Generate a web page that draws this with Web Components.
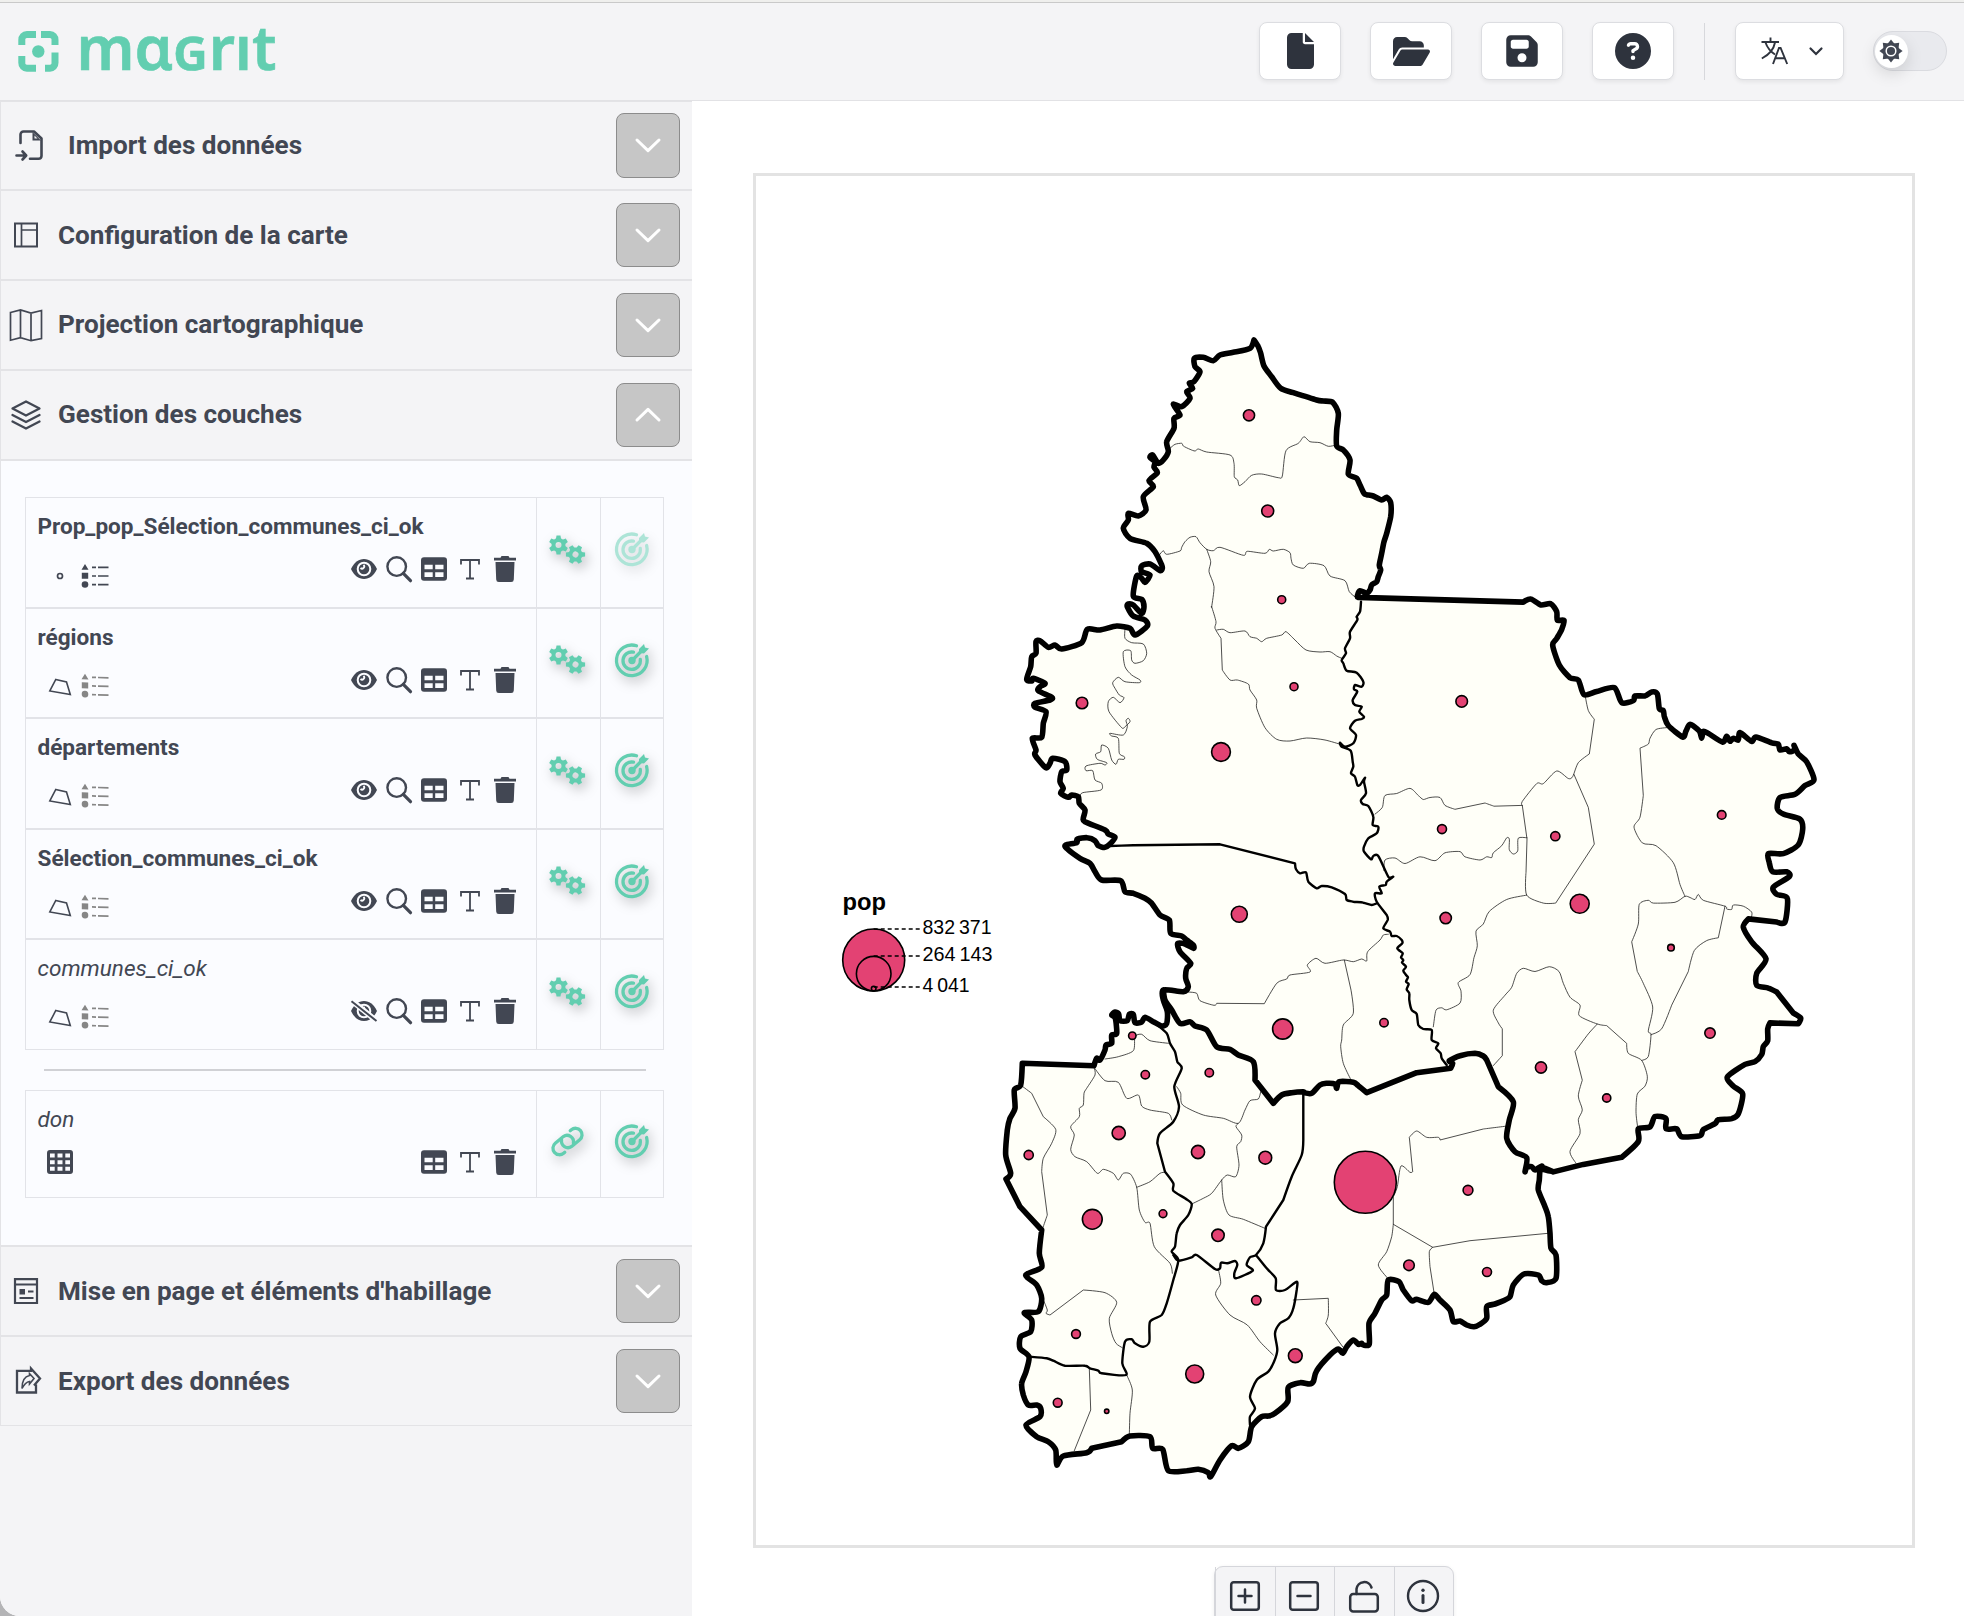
<!DOCTYPE html>
<html lang="fr">
<head>
<meta charset="utf-8">
<title>Magrit</title>
<style>
html,body{margin:0;height:100%;overflow:hidden;background:#b4b4b6}
body{font-family:Roboto,"Liberation Sans",sans-serif;color:#424753}
</style>
</head>
<body>
<mg-app>
  <mg-header slot="header"></mg-header>
  <mg-section slot="side" icon="import" label="Import des données" first></mg-section>
  <mg-section slot="side" icon="config" label="Configuration de la carte"></mg-section>
  <mg-section slot="side" icon="map" label="Projection cartographique" raise></mg-section>
  <mg-section slot="side" icon="layers" label="Gestion des couches" open raise></mg-section>
  <mg-section slot="side" icon="layout" label="Mise en page et éléments d'habillage"></mg-section>
  <mg-section slot="side" icon="export" label="Export des données" last></mg-section>
  <mg-map slot="main"></mg-map>
  <mg-tools slot="main"></mg-tools>
</mg-app>
<template id="layers">
  <mg-layer label="Prop_pop_Sélection_communes_ci_ok" kind="point" faded></mg-layer>
  <mg-layer label="régions" kind="poly"></mg-layer>
  <mg-layer label="départements" kind="poly"></mg-layer>
  <mg-layer label="Sélection_communes_ci_ok" kind="poly"></mg-layer>
  <mg-layer label="communes_ci_ok" kind="poly" off></mg-layer>
  <mg-layer slot="tables" label="don" kind="table" off></mg-layer>
</template>
<script>
document.querySelector('mg-section[open]').append(document.getElementById('layers').content.cloneNode(true));
const gear=(x,y,rot)=>`<g transform="translate(${x} ${y}) rotate(${rot})"><circle r="5" fill="none" stroke="currentColor" stroke-width="4"/>${[0,60,120,180,240,300].map(a=>`<path transform="rotate(${a})" d="M-2.600-6L-2-9.600H2L2.600-6z"/>`).join('')}</g>`;
const EYE='<path d="M0 13C3 6.500 7.500 3 13 3s10 3.500 13 10c-3 6.500-7.500 10-13 10S3 19.500 0 13z"/><circle cx="13" cy="13" r="6.300" fill="none" stroke="#fbfcff" stroke-width="2"/><path d="M9.500 12a2 2 0 0 0 3-3.200" fill="none" stroke="#fbfcff" stroke-width="1.800"/>';
const ICONS={
 file:[27,36,'0 0 384 512','<path d="M0 64C0 28.700 28.700 0 64 0H224V128c0 17.700 14.300 32 32 32H384V448c0 35.300-28.700 64-64 64H64c-35.300 0-64-28.700-64-64V64zm384 64H256V0L384 128z"/>'],
 folder:[37,33,'0 0 576 512','<path d="M88.700 223.800L0 375.800V96C0 60.700 28.700 32 64 32H181.500c17 0 33.300 6.700 45.300 18.700l26.500 26.500c12 12 28.300 18.700 45.300 18.700H416c35.300 0 64 28.700 64 64v32H144c-22.800 0-43.800 12.100-55.300 31.800zm27.600 16.100C122.100 230 132.600 224 144 224H544c11.500 0 22 6.100 27.700 16.100s5.700 22.200-.1 32.100l-112 192C453.900 474 443.400 480 432 480H32c-11.500 0-22-6.100-27.700-16.100s-5.700-22.200 .1-32.100l112-192z"/>'],
 save:[32,36,'0 0 448 512','<path fill-rule="evenodd" d="M64 32C28.700 32 0 60.700 0 96V416c0 35.300 28.700 64 64 64H384c35.300 0 64-28.700 64-64V173.300c0-17-6.700-33.300-18.700-45.300L352 50.700C340 38.700 323.700 32 306.700 32H64zm0 96c0-17.700 14.300-32 32-32H288c17.700 0 32 14.300 32 32v64c0 17.700-14.300 32-32 32H96c-17.700 0-32-14.300-32-32V128zM224 288a64 64 0 1 1 0 128 64 64 0 1 1 0-128z"/>'],
 help:[36,36,'0 0 512 512','<path fill-rule="evenodd" d="M256 512A256 256 0 1 0 256 0a256 256 0 1 0 0 512zM169.800 165.300c7.900-22.300 29.100-37.300 52.800-37.300h58.300c34.900 0 63.100 28.300 63.100 63.100c0 22.600-12.100 43.500-31.700 54.800L280 264.400c-.2 13-10.900 23.600-24 23.600c-13.300 0-24-10.700-24-24V250.500c0-8.600 4.600-16.500 12.100-20.800l44.300-25.400c4.700-2.700 7.600-7.700 7.600-13.100c0-8.400-6.800-15.100-15.100-15.100H222.600c-3.400 0-6.400 2.100-7.500 5.300l-.4 1.200c-4.400 12.500-18.200 19-30.600 14.600s-19-18.200-14.600-30.600l.4-1.200zM224 352a32 32 0 1 1 64 0 32 32 0 1 1 -64 0z"/>'],
 lang:[28,28,'0 0 28 28','<g fill="none" stroke="currentColor" stroke-width="1.900"><path d="M9.500.5v4M.5 5h17.500M14 5.500C13 11 8.500 17.500.8 21.500M4.500 5.500C6 10 9.500 14.500 14 17.500M12 27l6-16h1.600l6.600 16M14.500 21.200h9.500"/></g>'],
 caret:[14,9,'0 0 14 9','<path d="M1.500 1.500L7 7l5.500-5.500" fill="none" stroke="currentColor" stroke-width="2.200" stroke-linecap="round"/>'],
 sun:[24,24,'-12 -12 24 24',[0,45,90,135,180,225,270,315].map(a=>`<path transform="rotate(${a})" d="M-3.600-7L0-11.600 3.600-7z"/>`).join('')+'<circle r="8"/><circle r="4.800" fill="none" stroke="#fff" stroke-width="1.500"/>'],
 import:[32,32,'0 0 32 32','<g fill="none" stroke="currentColor" stroke-width="2.600" stroke-linecap="round" stroke-linejoin="round"><path d="M7.500 14V5.500A3 3 0 0 1 10.500 2.500H21L28.500 9.500V27A3 3 0 0 1 25.500 29.800H17"/><path d="M3.500 26.500H13M9.500 22.500L13.200 26.500 9.500 30.500"/></g><path d="M19.500 3v8.500H28z"/><path d="M21.500 6.500v3h3z" fill="#f4f4f6"/>'],
 config:[32,32,'0 0 32 32','<g fill="none" stroke="currentColor"><rect x="5" y="4.500" width="22" height="23" stroke-width="2"/><path d="M11.500 4v24M11.500 11H27" stroke-width="1.700"/></g>'],
 map:[34,34,'0 0 34 34','<path d="M1.500 4.500L11.500 2l10.500 3L32.500 2.500V30.500L22 32.700l-10.500-3-10 2.500zM11.500 2v28M22 5v27.500" fill="none" stroke="currentColor" stroke-width="1.700"/>'],
 layers:[32,32,'0 0 32 32','<g fill="none" stroke="currentColor" stroke-width="2.300" stroke-linejoin="round" stroke-linecap="round"><path d="M16 2.500L29.500 9.500 16 16.500 2.500 9.500z"/><path d="M2.500 16L16 23l13.500-7M2.500 22.500L16 29.500l13.500-7"/></g>'],
 layout:[32,32,'0 0 32 32','<g fill="none" stroke="currentColor" stroke-width="2.200"><path d="M5 4.200H27V28H5zM5 9.500H27M18 16.500h5.500M9.500 23h14"/></g><rect x="9.500" y="14" width="5.500" height="5.500"/>'],
 export:[32,32,'0 0 32 32','<g fill="none" stroke="currentColor" stroke-width="2.300" stroke-linejoin="miter"><path d="M17.500 5.800H7V27.500H26V19.500M17.500 5.800H21V3.500L30 13.500 24 20.500"/><path d="M12 23.500C12 15.500 14.500 11.500 19.500 10.500V8.500L24 13.500 19.500 19V16.500C16 17 14 19.500 12 23.500z" stroke-width="1.600"/></g>'],
 chev:[28,20,'0 0 28 20','<path d="M3 5L14 15.700 25 5" fill="none" stroke="#fff" stroke-width="3" stroke-linecap="round" stroke-linejoin="round"/>'],
 eye:[26,26,'0 0 26 26',EYE],
 eyeoff:[26,26,'0 0 26 26',EYE+'<path d="M.5 2.500L25 22.500" stroke="#fbfcff" stroke-width="5.500"/><path d="M.5 3.200L25.500 23" stroke="currentColor" stroke-width="2"/>'],
 search:[26,26,'0 0 26 26','<g fill="none" stroke="currentColor"><circle cx="10.700" cy="10.600" r="9.300" stroke-width="2.400"/><path d="M17.300 17.300L24.500 24.700" stroke-width="3.200" stroke-linecap="round"/></g>'],
 table:[26,26,'0 0 26 26','<path fill-rule="evenodd" d="M3 1.300H23A3 3 0 0 1 26 4.300V21.700A3 3 0 0 1 23 24.700H3A3 3 0 0 1 0 21.700V4.300A3 3 0 0 1 3 1.300zM3.500 8.800V13.300H11.700V8.800zM14.200 8.800V13.300H22.500V8.800zM3.500 16.200V21H11.700V16.200zM14.200 16.200V21H22.500V16.200z"/>'],
 type:[26,26,'0 0 26 26','<path d="M4 8.500V4H22V8.500M13 4V22.500M9 22.500H17" fill="none" stroke="currentColor" stroke-width="1.800"/>'],
 trash:[26,26,'0 0 26 26','<path d="M2 1.800H8.500L9.500 0H16.500L17.500 1.800H24V4.500H2zM3.500 6H22.500L21.800 23.500A2.600 2.600 0 0 1 19.200 26H6.800A2.600 2.600 0 0 1 4.200 23.500z"/>'],
 grid:[26,26,'0 0 26 26','<path fill-rule="evenodd" d="M3 1H23A3 3 0 0 1 26 4V22A3 3 0 0 1 23 25H3A3 3 0 0 1 0 22V4A3 3 0 0 1 3 1zM3 4.500H7.700V8.500H3zM10.500 4.500H15.500V8.500H10.500zM18.300 4.500H23V8.500H18.300zM3 11.200H7.700V15.200H3zM10.500 11.200H15.500V15.200H10.500zM18.300 11.200H23V15.200H18.300zM3 17.800H7.700V21.800H3zM10.500 17.800H15.500V21.800H10.500zM18.300 17.800H23V21.800H18.300z"/>'],
 point:[26,26,'0 0 26 26','<circle cx="13" cy="13" r="2.500" fill="none" stroke="currentColor" stroke-width="1.700"/>'],
 poly:[26,26,'0 0 26 26','<path d="M8.800 5.500L19.500 8 23.300 20.600 2.800 17z" fill="none" stroke="currentColor" stroke-width="1.600"/>'],
 legend:[28,26,'0 0 28 26','<path d="M4 1L7.500 6.800H.5zM.8 9.700H7.200V15.700H.8z"/><circle cx="4" cy="21.500" r="3.300"/><path d="M11 4.400h4M17 4.400h10.500M11 13h4M17 13h10.500M11 21.700h4M17 21.700h10.500" stroke="currentColor" stroke-width="1.700"/>'],
 gears:[36,29,'0 0 36 29',gear(9,9.5,0)+gear(26,19,30)],
 target:[36,36,'0 0 36 36','<g fill="none" stroke="currentColor" stroke-width="3.300" stroke-linecap="round"><path d="M22.500 3.300A15.300 15.300 0 1 0 32.600 14"/><path d="M19.500 9.700A8.700 8.700 0 1 0 26.300 17"/><path d="M18 18L28 8"/></g><circle cx="18" cy="18" r="3.700"/><path d="M25 10.500V6.500L30 1.500 31 5 35 6 30 11z"/>'],
 link:[36,36,'-18 -18 36 36','<g transform="rotate(-40)" fill="none" stroke="currentColor" stroke-width="3.300" stroke-linecap="round"><path d="M-9 6.500H-10.500A6.500 6.500 0 0 1-10.500-6.500H0A6.500 6.500 0 0 1 3.500 5"/><path transform="rotate(180)" d="M-9 6.500H-10.500A6.500 6.500 0 0 1-10.500-6.500H0A6.500 6.500 0 0 1 3.500 5"/></g>'],
 plus:[34,34,'0 0 34 34','<g fill="none" stroke="currentColor" stroke-width="2.500" stroke-linecap="round"><rect x="3.200" y="3.200" width="27.600" height="27.600" rx="2.500"/><path d="M10.500 17H23.500M17 10.500V23.500"/></g>'],
 minus:[34,34,'0 0 34 34','<g fill="none" stroke="currentColor" stroke-width="2.500" stroke-linecap="round"><rect x="3.200" y="3.200" width="27.600" height="27.600" rx="2.500"/><path d="M10.500 17H23.500"/></g>'],
 lock:[34,34,'0 0 34 34','<g fill="none" stroke="currentColor" stroke-width="2.500" stroke-linecap="round"><rect x="3.200" y="15" width="27.600" height="17.500" rx="3"/><path d="M9.500 15V10A7.700 7.700 0 0 1 24.500 8.500"/></g>'],
 info:[34,34,'0 0 34 34','<g fill="none" stroke="currentColor" stroke-width="2.400" stroke-linecap="round"><circle cx="17" cy="17" r="15"/><path d="M17 16.500V23.500" stroke-width="3"/></g><circle cx="17" cy="11.300" r="1.700"/>']
};
const svg=n=>{const i=ICONS[n];return `<svg width="${i[0]}" height="${i[1]}" viewBox="${i[2]}" fill="currentColor">${i[3]}</svg>`};
const def=(name,render)=>customElements.define(name,class extends HTMLElement{
  connectedCallback(){ if(!this.shadowRoot) this.attachShadow({mode:'open'}).innerHTML=render(this); }
});

def('mg-icon',e=>`<style>:host{display:inline-flex;flex:none}svg{display:block;overflow:visible}</style>${svg(e.getAttribute('name'))}`);

def('mg-app',()=>`<style>
:host{display:flex;flex-direction:column;height:1616px;width:1964px;background:#fff;border-bottom-left-radius:20px;overflow:hidden}
.body{display:flex;flex:1;min-height:0}
aside{width:692px;background:#f4f4f6;flex:none}
main{flex:1;display:flex;flex-direction:column;min-width:0;padding-top:72px}
</style><slot name="header"></slot><div class="body"><aside><slot name="side"></slot></aside><main><slot name="main"></slot></main></div>`);

def('mg-header',()=>`<style>
:host{display:flex;box-sizing:border-box;height:101px;flex:none;background:#f4f4f6;border-top:2px solid #efefed;border-bottom:1px solid #e2e2e5;padding:0 17px 0 18px;justify-content:space-between;color:#2e333d;box-shadow:inset 0 1px #c9c9c9}
.logo{margin-top:24px;display:block;overflow:visible}
nav{display:flex;align-items:center;height:98px}
.b{box-sizing:border-box;width:82px;height:58px;background:#fff;border:1px solid #dcdde1;border-radius:8px;box-shadow:0 2px 4px #0001;display:flex;align-items:center;justify-content:center;margin-right:29px}
.sep{width:1px;height:57px;background:#d7d8dc;margin:0 30px 0 1px}
.lang{width:109px;gap:20px;padding-left:4px}
.tg{box-sizing:border-box;width:74px;height:40px;border-radius:20px;border:1px solid #dadbe0;background:#e9eaee;display:flex;align-items:center;padding-left:1px}
.k{width:33px;height:33px;border-radius:50%;background:#fff;box-shadow:0 6px 16px #00000020;display:flex;align-items:center;justify-content:center;color:#424753}
.k mg-icon{margin-right:2px}
</style>
<svg class="logo" width="262" height="50" viewBox="0 0 262 50">
<path fill="none" stroke="#62ceb0" stroke-width="7" d="M3.800 19V13.800A5 5 0 0 1 8.800 8.500H18M23 8.500H32A5 5 0 0 1 37 13.800V19M37 26.500V37A5 5 0 0 1 32 42.200H27M18 42.200H8.800A5 5 0 0 1 3.800 37V30"/>
<circle cx="20.300" cy="25.500" r="6.200" fill="#62ceb0"/>
<text x="58.500" y="44.300" textLength="200" lengthAdjust="spacingAndGlyphs" font-family="Noto Sans" font-weight="600" font-size="62" fill="#62ceb0" stroke="#62ceb0" stroke-width=".6">mɑɢrıt</text>
</svg>
<nav>${['file','folder','save','help'].map(n=>`<div class="b"><mg-icon name="${n}"></mg-icon></div>`).join('')}<div class="sep"></div><div class="b lang"><mg-icon name="lang"></mg-icon><mg-icon name="caret"></mg-icon></div><div class="tg"><div class="k"><mg-icon name="sun"></mg-icon></div></div></nav>`);

def('mg-section',e=>{
 const open=e.hasAttribute('open'),first=e.hasAttribute('first'),last=e.hasAttribute('last'),raise=e.hasAttribute('raise');
 return `<style>
:host{display:block;border-left:1px solid #e3e3e6;border-bottom:${last?1:2}px solid #e3e3e6;${first?'border-top:1px solid #e3e3e6;':''}}
.h{display:flex;align-items:center;box-sizing:border-box;height:${first?87:88}px;padding:0 12px ${first?1:0}px ${first?11:8}px}
.i{width:${first?38:33}px;display:flex;justify-content:center;margin-left:${first?-2:0}px;padding-bottom:${raise?1:0}px}
h2{margin:0 0 0 ${first?20:16}px;flex:1;font-size:26.100px;font-weight:700;line-height:32px;padding-bottom:${raise?2:1}px;white-space:nowrap}
.c{box-sizing:border-box;width:64px;height:${first?65:64}px;background:#c6c6c6;border:1px solid #8c8c8c;border-radius:8px;display:flex;align-items:center;justify-content:center}
.c mg-icon{transform:${open?'rotate(180deg)':'none'}}
.p{box-sizing:border-box;height:786px;border-top:2px solid #e3e3e6;background:#fbfcff;padding:36px 28px 0 24px}
hr{border:0;height:2px;background:#d0d1d5;margin:19px 18px 19px 19px}
</style><div class="h"><div class="i"><mg-icon name="${e.getAttribute('icon')}"></mg-icon></div><h2>${e.getAttribute('label')}</h2><div class="c"><mg-icon name="chev"></mg-icon></div></div>
${open?'<div class="p"><slot></slot><hr><slot name="tables"></slot></div>':''}`});

def('mg-layer',e=>{
 const k=e.getAttribute('kind'),t=k=='table',off=e.hasAttribute('off');
 const acts=[...(t?[]:[off?'eyeoff':'eye','search']),'table','type','trash'];
 return `<style>
:host{display:flex;box-sizing:border-box;height:${t?108:110.5}px;border:1px solid #e2e3e8;background:#fbfcff}
.a{flex:1;padding:15px 18px 0 11.500px}
h3{margin:0;font-size:22.550px;line-height:28px;white-space:nowrap;font-weight:${off?'400;font-style:italic':'700'}}
.r{display:flex;justify-content:space-between;margin-top:15px;align-items:flex-start}
.l{display:flex;gap:8px;padding:${t?'0 0 0 9px':'7px 0 0 9px'};}
.lg{${k=='poly'?'color:#868686;transform:skewY(2deg) translateY(-1px)':''}}
.x{display:flex;gap:9.300px}
.s{width:63.500px;border-left:1px solid #e2e3e8;display:flex;align-items:center;justify-content:center;color:#62ceb0;box-sizing:border-box}
.s mg-icon{filter:drop-shadow(3px 5px 6px #0004);transform:translate(-.5px,-2.500px)}
.s:last-child mg-icon{transform:translate(0,-2.500px);${e.hasAttribute('faded')?'opacity:.5':''}}
</style><div class="a"><h3>${e.getAttribute('label')}</h3><div class="r"><div class="l">${t?'<mg-icon name="grid"></mg-icon>':`<mg-icon name="${k}"></mg-icon><mg-icon class="lg" name="legend"></mg-icon>`}</div><div class="x">${acts.map(a=>`<mg-icon name="${a}"></mg-icon>`).join('')}</div></div></div>
<div class="s"><mg-icon name="${t?'link':'gears'}"></mg-icon></div><div class="s"><mg-icon name="target"></mg-icon></div>`});

// Digitised boundary chunks; each sheet has its own origin and resolution.
const SHEETS={A:[1000,320,3,3],B:[1000,600,3,3],C:[1350,580,3,2.529],D:[990,980,3,3],E:[1220,1030,3,3]};
const at=(s,x,y)=>{const t=SHEETS[s];return [t[0]+x/t[2],t[1]+y/t[3]]};
// Short segments are rounded with a light Catmull-Rom tangent, long ones stay straight.
const line=str=>{
 let s,o=[];
 for(const w of str.trim().split(/\s+/)){if(SHEETS[w]){s=w;continue}const [x,y]=w.split(',').map(Number);o.push(at(s,x,y))}
 let d='M'+o[0].map(v=>v.toFixed(1)).join(' ');
 for(let i=1;i<o.length;i++){
  const a=o[i-1],b=o[i],p=o[i-2]||a,n=o[i+1]||b,len=Math.hypot(b[0]-a[0],b[1]-a[1]);
  const near=(q,r)=>Math.hypot(q[0]-r[0],q[1]-r[1])<26;
  if(len>26){d+='L'+b.map(v=>v.toFixed(1)).join(' ');continue}
  const k=.13,t1=near(p,a)?[(b[0]-p[0])*k,(b[1]-p[1])*k]:[0,0],t2=near(b,n)?[(n[0]-a[0])*k,(n[1]-a[1])*k]:[0,0];
  d+='C'+[a[0]+t1[0],a[1]+t1[1],b[0]-t2[0],b[1]-t2[1],b[0],b[1]].map(v=>v.toFixed(1)).join(' ');
 }
 return d;
};
const OUT=line(`A 762,60 775,80 782,100 792,138 815,170 842,205 880,218 950,240 970,243 998,247 1015,280 1010,330 1010,378 1030,390 1050,420 1045,462 1070,475 1080,495 1092,520 1100,524 1120,528 1145,540 1160,532 1172,548 1172,590 1160,640 1152,665 1145,700 1138,735 1142,750 1135,770 1130,785 1115,795 1110,810 1100,820 1080,812 1072,828
C 25,44 520,56 542,48 572,63 602,60 620,80 622,102 642,102 635,125 620,148 608,165 628,215 660,247 685,253 702,290 740,282 793,272 815,310 850,305 855,293 885,293 905,283 922,288 928,325 940,330 943,345 955,368 998,397 1008,382 1020,365 1048,382 1055,400 1060,383 1075,388 1118,410 1130,395 1140,408 1150,400 1165,405 1170,386 1205,408 1218,397 1265,412 1285,415 1290,430 1310,427 1318,434 1335,430 1332,418 1345,440 1370,460 1392,505 1365,520 1335,542 1290,550 1282,578 1300,592 1350,605 1358,630 1345,670 1300,692 1255,692 1258,715 1268,738 1310,738 1318,750 1270,777 1280,795 1312,805 1305,865 1280,865 1195,857 1180,878 1205,915 1248,958 1220,995 1220,1025 1255,1032 1280,1042 1330,1095 1352,1108 1345,1122 1260,1120 1253,1135 1253,1165 1240,1180 1235,1200 1215,1218 1185,1225 1132,1257 1150,1280 1178,1300 1165,1350 1145,1362 1105,1365 1095,1375 1060,1390 1050,1405 995,1408 980,1388 948,1388 948,1362 915,1357 900,1383 865,1388 865,1420 815,1460 700,1478 610,1497 575,1485
E 960,420 958,450 955,480 975,530 985,560 990,610 993,655 1008,675 1008,745 980,758 965,752 955,735 912,732 880,765 870,800 850,812 825,822 800,830 800,865 780,883 762,890 740,885 720,873 700,875 690,840 660,810 643,793 625,817 590,808 575,812 550,780 537,755 505,750 500,795 485,810 465,850 447,880 448,942 430,945 425,940 415,943 400,930 380,950 368,970 355,957 330,975 290,1022 280,1055 268,1062 240,1058 205,1072 203,1115 165,1150 145,1158 125,1160 95,1190 85,1235 55,1255 35,1247
D 690,1440 662,1490 655,1478 625,1468 590,1472 535,1472 518,1408 488,1405 480,1370 420,1368 395,1385 305,1405 290,1418 220,1428 200,1455 197,1410 175,1385 140,1370 108,1335 150,1310 152,1285 140,1275 115,1275 100,1245 95,1210 108,1175 117,1130 90,1105 92,1070 122,1055 125,1020 103,998 145,995 155,955 140,915 107,885 155,862 148,820 155,750 90,680 48,597 62,580 47,525 52,450 60,415 75,385 73,330 92,315 97,250 312,257 320,235 330,240 345,210 348,195 365,190 365,165 380,160 376,115 365,105 375,96 386,102 390,122 412,122 418,103 430,103 435,128 455,126 465,112 490,125 515,138 530,130 532,95 520,60 520,30
B 550,1175 565,1160 557,1135 560,1105 572,1090 540,1055 533,1030 555,1032 580,1045 580,1035 560,1020 545,1008 512,1000 508,960 480,945 455,910 435,895 400,880 375,875 362,842 305,840 285,815 270,790 240,775 200,745 197,735 230,728 232,717 262,713 285,722 295,737 315,742 330,732 345,712 325,702 315,690 255,665 250,655 255,630 238,610 235,590 215,585 205,592 182,580 190,565 180,545 185,515 200,510 195,485 158,475 150,490 137,503 105,465 108,450 97,415 125,412 130,370 138,335 105,322 105,310 150,300 155,292 115,272 120,260 135,250 100,235 95,243 80,238 92,200 95,170 108,160 108,125 120,122 145,142 165,135 185,147 245,128 262,88 300,90 350,78 390,85 405,105 442,78 435,60 400,48 382,20 385,12 400,15 425,40
A 432,860 425,838 400,828 410,768 425,775 435,787 450,765 425,755 425,737 450,732 480,752 487,745 485,735 465,695 440,670 390,655 370,625 385,600 385,580 415,588 438,570 430,530 460,500 447,482 472,458 462,442 465,425 450,412 458,405 475,430 490,420 505,395 500,365 522,325 522,295 540,285 520,253 545,260 570,235 560,215 578,205 568,190 582,185 600,155 585,140 583,115 610,112 640,122 660,105 700,97 750,85 762,60`)+'Z';
const THICK=[`B 490,1170 495,1200 D 545,90 570,130 600,125 615,138 650,150 680,200 720,208 745,225 790,245 795,300 850,370 875,345 905,338 940,335 E 252,188 275,190 300,165 320,160 345,162 350,175 358,155 400,157 415,167 440,188 590,128 692,115 698,100 688,92 720,77 765,70 790,78 800,90 835,170 880,215 868,270 860,325 885,365 920,383 915,425 920,412 935,410 945,420 965,408 970,418 1000,425`].map(line);
const MID=[`B 1083,5 1080,35 1070,50 1072,60 1050,95 1050,115 1035,145 1038,160 1025,180 1030,190 1040,212 1070,218 1090,245 1085,260 1065,255 1062,268 1072,275 1058,300 1065,315 1085,320 1078,335 1092,350 1085,357 1065,362 1050,385 1068,405 1060,430 1035,440 1020,428 1025,440 1052,452 1058,485 1060,500 1053,520 1065,530 1072,555 1080,555 1095,533 1092,545 1098,580 1083,600 1088,612 1105,618 1120,650 1118,675 1135,680 1130,700 1105,715 1092,740 1092,755 1113,778 1120,768 1135,768 1165,830 1180,830 1160,845 1157,855 1138,860 1145,880 1125,880 1130,905 1160,945 1163,960 1150,985 1170,995 1175,1008 1190,1008 1205,1020 1207,1030 1192,1045 1208,1060 1203,1072 1210,1080 1206,1088 1218,1100 1210,1112 1218,1125 1224,1132 1218,1145 1226,1152 1220,1168 1228,1180 1228,1200 1235,1230 1250,1242 1255,1275 1270,1287 1295,1290 E 635,30 655,40 648,55 662,70 665,85 680,105`,
`B 330,738 400,736 660,733 885,790 888,808 900,820 918,817 925,845 950,865 965,858 995,862 1035,882 1040,900 1060,905 1090,908 1115,915 1130,910`,
`D 490,125 530,160 540,190 555,215 562,245 575,265 553,320 567,380 550,425 510,460 502,490 525,575 550,610 550,632 585,655 605,672 595,705 570,735 560,760 555,800 545,815 565,840 550,900 530,970 515,1005 480,1025 478,1085 460,1100 435,1090 425,1078 405,1085 397,1150 408,1185 335,1180 325,1172 300,1165 285,1157 225,1157 190,1142 170,1135 117,1130`,
`D 550,825 565,842 605,832 620,825 675,867 690,865 693,848 712,850 735,843 742,855 733,880 738,895 788,872 770,855 780,832 798,825 820,790 828,740 880,660 905,590 935,525 940,480 940,345`,
`D 798,825 830,865 857,895 858,930 885,930 920,905 920,930 910,985 895,1015 870,1030 855,1060 862,1110 852,1145 835,1175 800,1200 780,1250 795,1285 780,1310 780,1335`].map(line);
const THIN=[`A 510,385 525,373 545,370 550,378 570,388 585,393 595,387 620,396 690,405 702,430 703,470 713,480 718,497 735,485 755,466 785,462 835,473 847,468 858,392 895,370 912,350 930,365 960,368 985,379 1008,375`,
`A 478,705 490,692 500,703 540,693 545,682 555,665 570,652 588,650 600,668 620,688 640,692 660,682 730,706 742,694 795,700 808,688 820,693 850,688 870,698 873,715 880,735 910,745 928,730 972,737 990,768 1035,782 1048,815 1068,833`,
`A 620,688 632,725 627,755 642,800 635,860 B 635,20 648,65 645,85 663,115 667,210 690,240 712,240 745,252 750,270 770,300 770,325 795,383 830,418 870,423 920,414 975,420 1025,434`,
`B 650,90 670,88 690,98 735,93 750,110 770,115 785,125 800,115 845,105 858,95 885,120 918,150 960,156 990,155 1010,168 1025,175`,
`B 375,88 375,115 395,128 430,132 440,160 430,182 405,190 395,180 392,152 370,155 375,200 395,225 420,240 418,248 375,245 355,232 338,248 345,265 358,285 372,293 360,308 340,292 325,305 327,335 365,383 375,380 390,365 385,355 378,362 382,380 370,405 330,400 335,408 355,415 358,460 373,470 372,478 355,478 348,493 335,480 325,445 305,435 302,455 287,462 292,478 320,488 315,495 300,490 258,498 258,512 278,512 285,540 305,550 303,570 248,578 240,590`,
`B 565,1176 590,1180 600,1202 642,1216 650,1210 793,1211 830,1150 860,1137 870,1125 930,1116 922,1095 948,1075 975,1090 1030,1080 1060,1085 1085,1077 1100,1083 1103,1055 1140,1020 1150,1005 1165,1003`,
`B 1033,1080 1053,1170 1060,1240 1030,1275 1025,1320 E 362,50 370,100 392,148`,
`C 705,290 715,330 733,352 718,440 685,462 668,497 655,502 620,483 580,515 560,515 517,560 517,570 432,572 405,564 315,580 285,570 270,550 240,550 220,555 205,545 180,527 140,540 105,545 97,575 75,592`,
`C 672,492 715,575 733,668 617,817 580,817 530,797 528,740 531,655 517,570`,
`C 531,652 505,653 503,685 490,693 478,682 478,655 470,652 455,672 430,690 425,702 410,700 390,708 345,700 330,687 285,690 255,710 210,700 165,717 135,703 105,708 102,735`,
`C 530,797 470,808 418,838 400,870 378,888 382,925 372,955 360,998 325,1018 333,1040 330,1070 290,1087 275,1082 258,1088 250,1130`,
`C 430,1228 457,1203 457,1135 445,1120 430,1088 465,1050 485,1030 500,995 520,982 555,990 598,978 627,990 640,1020 660,1055 690,1075 688,1102 742,1123 770,1127 830,1172 835,1197 875,1215 892,1255 885,1280 862,1300 858,1345 863,1385`,
`C 742,1123 715,1148 675,1193 697,1265 685,1305 697,1340 685,1365 690,1400 660,1445 678,1475`,
`C 875,1215 895,1205 903,1150 895,1140 908,1080 880,1020 862,990 845,915 865,870 868,820 895,810 910,817 975,815 1005,800 1020,803 1035,808 1045,795 1060,810 1125,825 1130,832 1145,833 1150,822 1180,825 1205,840 1203,857`,
`C 903,1150 935,1135 965,1075 1015,990 1033,937 1070,912 1105,905 1125,825`,
`C 1005,800 990,770 970,715 918,672 877,665 852,625 870,600 880,545 870,425 895,415 900,400 918,378 955,373`,
`E 862,288 790,297 660,330 655,322 620,322 590,303 568,322 578,425 570,427 543,408 532,470 520,500 520,583 515,620 500,665 475,705 503,745`,
`E 520,583 638,652 750,632 985,610`,`E 638,652 628,665 630,710 643,793`,
`D 345,237 385,230 430,212 435,170 455,163 480,182 535,190`,
`D 312,262 345,302 385,307 410,355 445,345 455,378 480,390 535,400 545,420`,
`D 312,262 315,285 290,325 282,340 280,375 268,385 268,410 242,440 253,465 242,508 255,530 290,545 322,580 340,568 370,580 385,600 400,580 422,583 440,622 448,690 465,727 480,730 493,800 540,850 547,880`,
`D 440,622 480,605 510,580 525,577`,
`D 92,315 125,340 160,410 197,448 185,490 160,535 155,575 172,705 158,745`,
`D 160,960 172,990 168,1000 180,1005 280,930 345,938 380,967 358,1015 365,1060 378,1090 397,1103`,
`D 298,1165 302,1290 253,1412`,`D 410,1185 427,1230 420,1300 418,1368`,
`D 560,320 572,340 578,375 640,405 700,415 745,430 765,390 780,362 805,357 812,335`,
`D 745,430 738,440 755,465 752,485 740,500 747,555 737,590 712,585 695,600 665,640 640,655 605,672`,
`D 695,600 700,660 717,705 760,718 825,745`,
`D 685,867 692,910 677,945 720,1005 772,1035 810,1085 850,1125`,
`D 910,960 1015,955 E 325,855 317,880 368,950`].map(line);
const DOTS={A:[[747,286,5.6],[803,573,6],[845,839,4]],B:[[882,260,4],[246,309,5.8],[663,456,9.4],[718,943,8],[848,1287,10.1],[1152,1268,4.2]],
C:[[335,307,5.8],[276,630,4.5],[616,648,4.6],[1115,594,4.3],[287,855,5.7],[689,819,9.5],[963,930,3.3],[1080,1146,5.2],[573,1233,5.6],[770,1310,4.1]],
E:[[436,457,31],[744,481,4.9],[567,706,5.3],[801,726,4.5],[226,977,6.9],[109,811,4.7]],
D:[[427,167,3.7],[466,284,4.2],[658,278,4.2],[386,459,6.6],[624,516,6.6],[826,533,6.4],[116,525,4.6],[307,718,9.9],[519,701,3.9],[684,766,6.2],[258,1062,4.4],[203,1268,4.4],[350,1294,2.2],[614,1182,9]]};

def('mg-map',()=>{
 const p=(a,w,c='#000')=>`<path d="${a.join('')}" fill="none" stroke="${c}" stroke-width="${w}"/>`;
 return `<style>:host{display:block;box-sizing:border-box;width:1162px;height:1375px;border:3px solid #e3e3e3;margin-left:61px;flex:none}svg{display:block}</style>
<svg width="1156" height="1369" viewBox="756 176 1156 1369" stroke-linejoin="round" stroke-linecap="round">
<path d="${OUT}" fill="#fffff8"/>${p(THIN,.8,'#222')}${p(MID,2.4)}${p([OUT,...THICK],5.6)}
<g fill="#e34273" stroke="#000" stroke-width="1.600">${Object.entries(DOTS).map(([s,l])=>l.map(([x,y,r])=>{const q=at(s,x,y);return `<circle cx="${q[0].toFixed(1)}" cy="${q[1].toFixed(1)}" r="${r}"/>`}).join('')).join('')}
<circle cx="873.700" cy="960" r="31"/><circle cx="873.700" cy="973.700" r="17.300"/><circle cx="873.700" cy="988.600" r="2.300"/></g>
<path d="M873.700 929H921M873.700 956H921M873.700 987H921" stroke="#000" stroke-width="1.300" stroke-dasharray="4 3" stroke-linecap="butt"/>
<g font-family="Liberation Sans,Arial,sans-serif" fill="#000"><text x="842.500" y="909.500" font-size="23.500" font-weight="700" textLength="43.500" lengthAdjust="spacingAndGlyphs">pop</text>
<g font-size="19.700"><text x="922.500" y="933.800" textLength="69" lengthAdjust="spacingAndGlyphs">832&#8201;371</text><text x="922.500" y="961" textLength="70" lengthAdjust="spacingAndGlyphs">264&#8201;143</text><text x="922.500" y="991.800" textLength="47" lengthAdjust="spacingAndGlyphs">4&#8201;041</text></g></g>
</svg>`});

def('mg-tools',()=>`<style>
:host{display:flex;box-sizing:border-box;margin:18px 0 0 522px;width:240px;height:62px;flex:none;background:#f4f4f6;border:1px solid #d5d6db;border-radius:9px;box-shadow:0 1px 4px #0001;color:#2e333d}
div{flex:1;display:flex;justify-content:center;padding:12px 1px 0 0;border-left:1px solid #d5d6db}
div:first-child{border:0}
</style>${['plus','minus','lock','info'].map(n=>`<div><mg-icon name="${n}"></mg-icon></div>`).join('')}`);
</script>
</body>
</html>
